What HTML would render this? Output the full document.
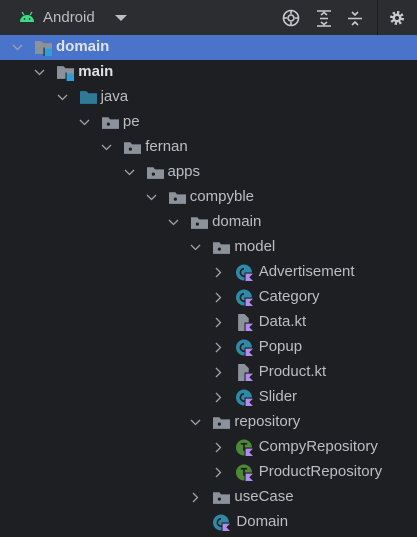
<!DOCTYPE html><html><head><style>
body{margin:0;width:417px;height:537px;background:#1e1f22;overflow:hidden;font-family:"Liberation Sans",sans-serif;position:relative}
.hdr{position:absolute;left:0;top:0;width:417px;height:35px;background:#2b2d30;border-bottom:1px solid #1a1b1d}
.row{position:absolute;left:0;width:417px;height:25px}
.sel{background:#4a74c9}
.t{position:absolute;top:3px;font-size:15px;color:#bcbec4;white-space:nowrap}
.a{position:absolute;top:7px;width:11px;height:11px}
.i{position:absolute;top:4px;width:17px;height:17px}
</style></head><body>
<div class="hdr">
<svg style="position:absolute;left:19px;top:11px" width="16" height="12" viewBox="0 0 16 12"><path d="M1 11 A7 7 0 0 1 15 11Z" fill="#3ddc84"/><line x1="3" y1="1" x2="5" y2="4" stroke="#3ddc84" stroke-width="1.3"/><line x1="13" y1="1" x2="11" y2="4" stroke="#3ddc84" stroke-width="1.3"/><circle cx="5.5" cy="8" r="0.9" fill="#2b2d30"/><circle cx="10.5" cy="8" r="0.9" fill="#2b2d30"/></svg>
<div style="position:absolute;left:43px;top:9px;font-size:15px;color:#bcbec4">Android</div>
<svg style="position:absolute;left:115px;top:15px" width="12" height="7"><path d="M0 0H12L6 6Z" fill="#bcbec4"/></svg>
<svg style="position:absolute;left:282px;top:9px" width="18" height="18" viewBox="0 0 18 18" fill="none" stroke="#c9cbd0" stroke-width="1.6"><circle cx="9" cy="9" r="7.5"/><circle cx="9" cy="9" r="3"/><path d="M9 1V5M9 13V17M1 9H5M13 9H17"/></svg>
<svg style="position:absolute;left:316px;top:10px" width="16" height="17" viewBox="0 0 16 17" fill="none" stroke="#c9cbd0" stroke-width="1.6"><path d="M1 1H15M1 16H15M5 5L8 2.5L11 5M5 12L8 14.5L11 12M4 8.5H12"/></svg>
<svg style="position:absolute;left:347px;top:10px" width="16" height="17" viewBox="0 0 16 17" fill="none" stroke="#c9cbd0" stroke-width="1.6"><path d="M1 8.5H15M5 2L8 5L11 2M5 15L8 12L11 15"/></svg>
<div style="position:absolute;left:377px;top:0;width:1px;height:35px;background:#1a1b1d"></div>
<svg style="position:absolute;left:389px;top:10px" width="16" height="16" viewBox="0 0 16 16"><circle cx="8" cy="8" r="5.5" fill="none" stroke="#c9cbd0" stroke-width="3" stroke-dasharray="2.2 2.1"/><circle cx="8" cy="8" r="4.5" fill="#c9cbd0"/><circle cx="8" cy="8" r="2" fill="#2b2d30"/></svg>
</div>
<div id="tree"></div>
<script>
var rows=[
[0,'domain','mod','d',1],[1,'main','mod','d',1],[2,'java','src','d'],[3,'pe','pkg','d'],[4,'fernan','pkg','d'],[5,'apps','pkg','d'],[6,'compyble','pkg','d'],[7,'domain','pkg','d'],[8,'model','pkg','d'],
[9,'Advertisement','cls','r'],[9,'Category','cls','r'],[9,'Data.kt','file','r'],[9,'Popup','cls','r'],[9,'Product.kt','file','r'],[9,'Slider','cls','r'],
[8,'repository','pkg','d'],[9,'CompyRepository','int','r'],[9,'ProductRepository','int','r'],[8,'useCase','pkg','r'],[8,'Domain','cls','']];
var icons={
mod:'<path d="M0 2H6L8 4H16V14H0Z" fill="#8c929b"/><rect x="9" y="9" width="7" height="7" fill="#2f9fd8"/><rect x="8" y="8" width="1" height="8" fill="#1e1f22"/>',
src:'<path d="M0 2H6L8 4H16V14H0Z" fill="#2f7a98"/>',
pkg:'<path d="M0 3H6L7.5 5H16V14H0Z" fill="#8c929b"/><circle cx="6" cy="9.5" r="1.5" fill="#1e1f22"/>',
cls:'<circle cx="7.5" cy="8" r="7.5" fill="#2e8aa6"/><path d="M7.5 4.5A3.5 3.5 0 1 0 11 9" fill="none" stroke="#1e1f22" stroke-width="1.6"/><path d="M8 8H16V16H8Z" fill="#1e1f22"/><path d="M9 9H16L12.5 12.5L16 16H9Z" fill="#b28cf0"/>',
int:'<circle cx="7.5" cy="8" r="7.5" fill="#4c8a3a"/><path d="M4.5 4.5H10.5M7.5 4.5V11" stroke="#1e1f22" stroke-width="1.6"/><path d="M8 8H16V16H8Z" fill="#1e1f22"/><path d="M9 9H16L12.5 12.5L16 16H9Z" fill="#b28cf0"/>',
file:'<path d="M2 0H8L12 4V16H2Z" fill="#8c929b"/><path d="M8 8H16V16H8Z" fill="#1e1f22"/><path d="M9 9H16L12.5 12.5L16 16H9Z" fill="#b28cf0"/>'};
var h='';
rows.forEach(function(r,k){
 var top=35+25*k, ix=35+22.3*r[0], ax=ix-23;
 h+='<div class="row'+(k==0?' sel':'')+'" style="top:'+top+'px">';
 if(r[3]=='d')h+='<svg class="a" style="left:'+ax+'px" viewBox="0 0 11 11"><path d="M1 3L5.5 7.5L10 3" fill="none" stroke="#9ea2a8" stroke-width="1.3"/></svg>';
 if(r[3]=='r')h+='<svg class="a" style="left:'+ax+'px" viewBox="0 0 11 11"><path d="M3 1L7.5 5.5L3 10" fill="none" stroke="#9ea2a8" stroke-width="1.3"/></svg>';
 h+='<svg class="i" style="left:'+ix+'px" viewBox="0 0 16 16">'+icons[r[2]]+'</svg>';
 h+='<div class="t" style="left:'+(ix+(r[2]=='cls'||r[2]=='int'||r[2]=='file'?23:21))+'px;'+(r[4]?'font-weight:bold;color:#dfe1e5':'')+'">'+r[1]+'</div></div>';
});
document.getElementById('tree').innerHTML=h;
</script>
</body></html>
